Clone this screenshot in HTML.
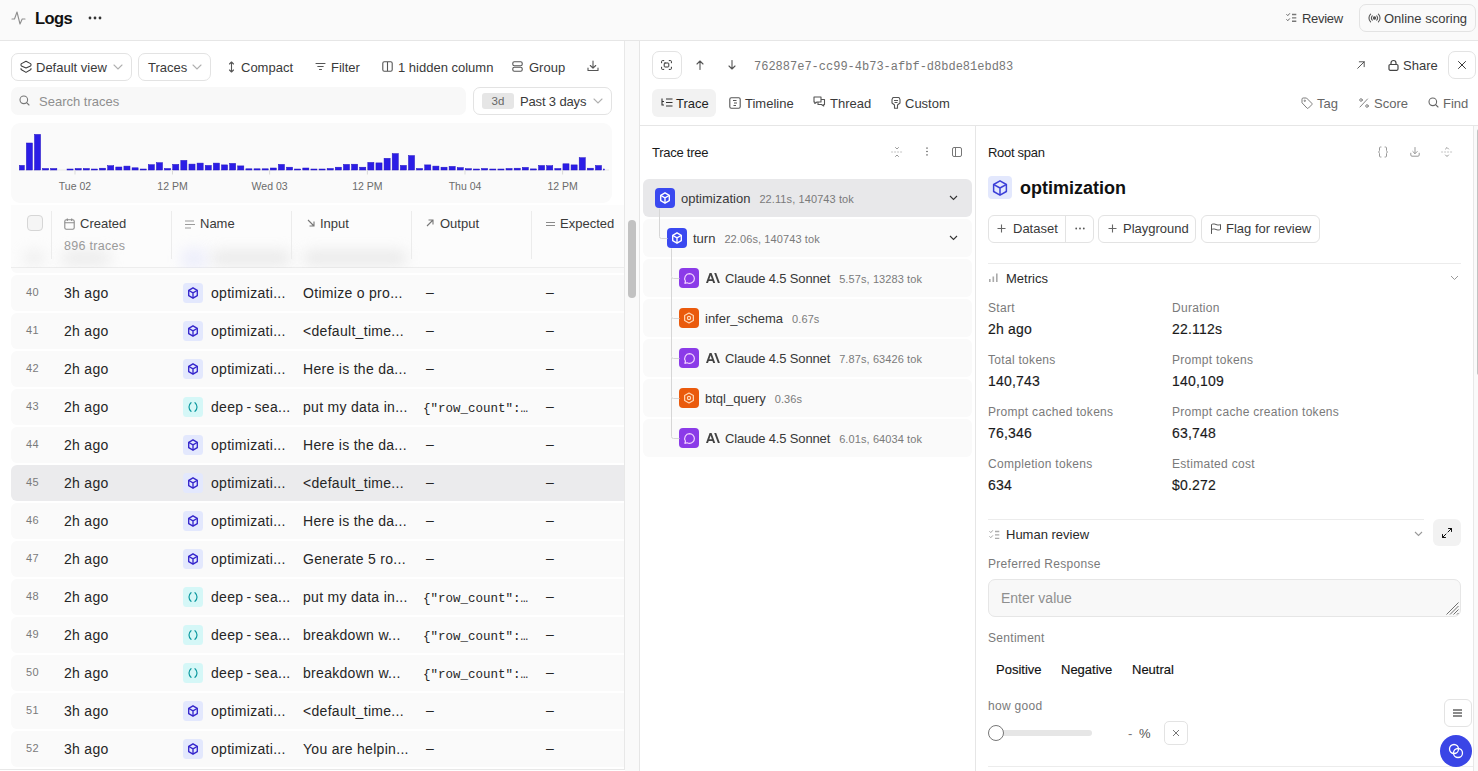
<!DOCTYPE html>
<html><head><meta charset="utf-8">
<style>
*{box-sizing:border-box}
html,body{margin:0;padding:0}
body{width:1478px;height:771px;overflow:hidden;position:relative;background:#fff;font-family:"Liberation Sans",sans-serif;color:#1f1f1f;font-size:13px}
.abs{position:absolute}
svg{display:block}
.topbar{position:absolute;left:0;top:0;width:1478px;height:41px;background:#fafafa;border-bottom:1px solid #e6e6e6}
.btn{position:absolute;border:1px solid #e3e3e3;border-radius:7px;background:#fff}
.t13{font-size:13px;line-height:16px;color:#3a3a3a;white-space:nowrap}
.ic{position:absolute;color:#555}
/* table */
.row{position:absolute;left:11px;width:700px;height:36px;background:#fafafa;border-radius:6px;font-size:14px;line-height:36px;color:#262626;letter-spacing:0.3px;white-space:nowrap}
.row.sel{background:#ebebed}
.row .rn{position:absolute;left:15px;top:-1px;font-size:11px;color:#7a7a7a;letter-spacing:0.3px}
.row .c1{position:absolute;left:53px;top:0}
.row .nic{position:absolute;left:172px;top:8px;width:20px;height:20px;border-radius:3.5px;display:flex;align-items:center;justify-content:center}
.row .c2{position:absolute;left:200px;top:0}
.row .c3{position:absolute;left:292px;top:0}
.row .c4{position:absolute;left:412px;top:0}
.dash{margin-left:3px;position:relative;top:-1.5px}
.row .c5{position:absolute;left:535px;top:0}
.mono{font-family:"Liberation Mono",monospace;font-size:12.5px;letter-spacing:0}
.tlab{position:absolute;top:179px;width:80px;text-align:center;font-size:10.5px;color:#6b6b6b;line-height:14px}
.th{position:absolute;top:216px;font-size:13px;line-height:16px;color:#3a3a3a;white-space:nowrap}
.vdiv{position:absolute;top:211px;width:1px;height:48px;background:#ececec}
/* right panel */
.tab{position:absolute;top:90px;height:28px;line-height:28px;font-size:13px;color:#3a3a3a;white-space:nowrap}
.tree-row{position:absolute;left:643px;width:329px;height:38px;border-radius:6px;background:#fafafa;white-space:nowrap}
.tree-row.sel{background:#e8e8ea}
.tic{position:absolute;top:9px;width:20px;height:20px;border-radius:4px;display:flex;align-items:center;justify-content:center}
.tname{position:absolute;top:1px;line-height:37px;font-size:13px;color:#383838}
.tmeta{font-size:11px;color:#7a7a7a;margin-left:9px;letter-spacing:0.1px;position:relative;top:-0.5px}
.mlab{position:absolute;font-size:12px;color:#7a7a7a;line-height:14px;white-space:nowrap;letter-spacing:0.3px}
.mval{position:absolute;font-size:14px;color:#1a1a1a;line-height:16px;white-space:nowrap;-webkit-text-stroke:0.15px #1a1a1a;letter-spacing:0.2px}
.sent{top:662px;font-size:13px;line-height:16px;color:#111;-webkit-text-stroke:0.15px #111}
</style></head>
<body>
<!-- TOP BAR -->
<div class="topbar"></div>
<div class="ic" style="left:11px;top:11px;color:#8e8e8e">
<svg width="15" height="14" viewBox="0 0 15 14" fill="none" stroke="currentColor" stroke-width="1.1" stroke-linecap="round" stroke-linejoin="round"><path d="M1 8h2.5L6 1l3 12 2.2-5H14"/></svg></div>
<div class="abs" style="left:35px;top:8px;font-size:16.5px;line-height:20px;font-weight:bold;color:#111;letter-spacing:-0.6px">Logs</div>
<div class="abs" style="left:88px;top:16px"><svg width="14" height="4" viewBox="0 0 14 4" fill="#333"><circle cx="2" cy="2" r="1.4"/><circle cx="7" cy="2" r="1.4"/><circle cx="12" cy="2" r="1.4"/></svg></div>

<div class="ic" style="left:1286px;top:13px;color:#555"><svg width="11" height="10" viewBox="0 0 11 10" fill="none" stroke="currentColor" stroke-width="0.9" stroke-linecap="round"><path d="M0.7 1.5l1.1 1.1L3.6 0.6M0.7 6.6l1.1 1.1 1.8-2"/><path d="M6 1.5h4.3M6 4.9h4.3M6 8.3h4.3" stroke-width="1.4" stroke-linecap="butt" stroke="#777"/></svg></div>
<div class="abs t13" style="left:1302px;top:11px;letter-spacing:-0.3px">Review</div>
<div class="btn" style="left:1359px;top:4px;width:117px;height:28px;background:#fafafa"></div>
<div class="ic" style="left:1368px;top:12px;color:#555"><svg width="13" height="12" viewBox="0 0 13 12" fill="none" stroke="currentColor" stroke-width="1.1" stroke-linecap="round"><circle cx="6.5" cy="6" r="1.2" fill="currentColor"/><path d="M4.3 3.8a3.1 3.1 0 0 0 0 4.4M8.7 3.8a3.1 3.1 0 0 1 0 4.4M2.6 2.1a5.5 5.5 0 0 0 0 7.8M10.4 2.1a5.5 5.5 0 0 1 0 7.8"/></svg></div>
<div class="abs t13" style="left:1384px;top:11px">Online scoring</div>

<!-- LEFT PANEL -->
<div class="btn" style="left:11px;top:53px;width:121px;height:28px"></div>
<div class="ic" style="left:20px;top:60px"><svg width="12" height="14" viewBox="0 0 12 14" fill="none" stroke="#3a3a3a" stroke-width="1.05" stroke-linejoin="round" stroke-linecap="round"><path d="M1 4.5Q1 4 1.5 3.6L6 1.3l4.5 2.3Q11 4 11 4.5v0.6Q11 5.6 10.5 6L6 7.9 1.5 6Q1 5.6 1 5.1z"/><path d="M1 8.6v0.4Q1 9.4 1.5 9.8L6 12.4l4.5-2.6Q11 9.4 11 9v-0.4"/></svg></div>
<div class="abs t13" style="left:36px;top:60px">Default view</div>
<div class="ic" style="left:113px;top:64px"><svg width="10" height="6" viewBox="0 0 10 6" fill="none" stroke="#b0b0b0" stroke-width="1.1" stroke-linecap="round"><path d="M1 1l4 4 4-4"/></svg></div>
<div class="btn" style="left:138px;top:53px;width:73px;height:28px"></div>
<div class="abs t13" style="left:148px;top:60px">Traces</div>
<div class="ic" style="left:192px;top:64px"><svg width="10" height="6" viewBox="0 0 10 6" fill="none" stroke="#b0b0b0" stroke-width="1.1" stroke-linecap="round"><path d="M1 1l4 4 4-4"/></svg></div>

<div class="ic" style="left:228px;top:61px"><svg width="7" height="12" viewBox="0 0 7 12" fill="none" stroke="#555" stroke-width="1.1" stroke-linecap="round" stroke-linejoin="round"><path d="M3.5 1v10M1.5 3L3.5 1l2 2M1.5 9l2 2 2-2"/></svg></div>
<div class="abs t13" style="left:241px;top:60px">Compact</div>
<div class="ic" style="left:315px;top:62px"><svg width="11" height="9" viewBox="0 0 11 9" fill="none" stroke="#555" stroke-width="1.1" stroke-linecap="round"><path d="M1 1.5h9M2.8 4.5h5.4M4.5 7.5h2"/></svg></div>
<div class="abs t13" style="left:331px;top:60px">Filter</div>
<div class="ic" style="left:382px;top:61px"><svg width="11" height="11" viewBox="0 0 11 11" fill="none" stroke="#555" stroke-width="1.1"><rect x="0.8" y="0.8" width="9.4" height="9.4" rx="1.5"/><path d="M5.5 1v9"/></svg></div>
<div class="abs t13" style="left:398px;top:60px">1 hidden column</div>
<div class="ic" style="left:512px;top:61px"><svg width="11" height="11" viewBox="0 0 11 11" fill="none" stroke="#555" stroke-width="1.1"><rect x="0.8" y="0.8" width="9.4" height="4" rx="1.5"/><rect x="0.8" y="6.2" width="9.4" height="4" rx="1.5"/></svg></div>
<div class="abs t13" style="left:529px;top:60px">Group</div>
<div class="ic" style="left:587px;top:60px"><svg width="12" height="12" viewBox="0 0 12 12" fill="none" stroke="#555" stroke-width="1.1" stroke-linecap="round" stroke-linejoin="round"><path d="M6 1v7M3.3 5.5L6 8.2l2.7-2.7M1 8v2.5h10V8"/></svg></div>

<!-- search -->
<div class="abs" style="left:11px;top:87px;width:455px;height:28px;background:#f8f8f8;border-radius:7px"></div>
<div class="ic" style="left:19px;top:95px"><svg width="11" height="11" viewBox="0 0 11 11" fill="none" stroke="#777" stroke-width="1.1" stroke-linecap="round"><circle cx="4.8" cy="4.8" r="3.8"/><path d="M7.6 7.6L10 10"/></svg></div>
<div class="abs t13" style="left:39px;top:94px;color:#8f8f8f">Search traces</div>
<div class="btn" style="left:473px;top:87px;width:139px;height:28px"></div>
<div class="abs" style="left:482px;top:93px;width:32px;height:16px;background:#e6e6e6;border-radius:3px;font-size:11.5px;line-height:17px;text-align:center;color:#666">3d</div>
<div class="abs t13" style="left:520px;top:94px;letter-spacing:-0.15px">Past 3 days</div>
<div class="ic" style="left:593px;top:98px"><svg width="10" height="6" viewBox="0 0 10 6" fill="none" stroke="#b0b0b0" stroke-width="1.1" stroke-linecap="round"><path d="M1 1l4 4 4-4"/></svg></div>

<!-- chart -->
<div class="abs" style="left:11px;top:123px;width:601px;height:80px;background:#fafafa;border-radius:9px"></div>
<svg class="abs" style="left:0;top:0" width="625" height="205" viewBox="0 0 625 205">
<rect x="19" y="169.5" width="590" height="1" fill="#e6e6e6"/>
<g fill="#2b1de6" stroke="#2414c2" stroke-width="0.5"><rect x="19.35" y="165.40" width="4.97" height="4.60"/><rect x="26.35" y="143.00" width="6.10" height="27.00"/><rect x="34.48" y="134.40" width="6.10" height="35.60"/><rect x="42.61" y="168.50" width="6.10" height="1.50"/><rect x="50.74" y="168.50" width="6.10" height="1.50"/><rect x="67.00" y="169.00" width="6.10" height="1.00"/><rect x="75.13" y="168.50" width="6.10" height="1.50"/><rect x="83.26" y="168.50" width="6.10" height="1.50"/><rect x="91.39" y="169.00" width="6.10" height="1.00"/><rect x="99.52" y="168.20" width="6.10" height="1.80"/><rect x="107.65" y="165.70" width="6.10" height="4.30"/><rect x="115.78" y="167.00" width="6.10" height="3.00"/><rect x="123.91" y="166.10" width="6.10" height="3.90"/><rect x="132.04" y="167.80" width="6.10" height="2.20"/><rect x="140.17" y="169.00" width="6.10" height="1.00"/><rect x="148.30" y="164.70" width="6.10" height="5.30"/><rect x="156.43" y="162.70" width="6.10" height="7.30"/><rect x="164.56" y="168.50" width="6.10" height="1.50"/><rect x="172.69" y="164.40" width="6.10" height="5.60"/><rect x="180.82" y="160.40" width="6.10" height="9.60"/><rect x="188.95" y="164.10" width="6.10" height="5.90"/><rect x="197.08" y="163.10" width="6.10" height="6.90"/><rect x="205.21" y="165.40" width="6.10" height="4.60"/><rect x="213.34" y="163.10" width="6.10" height="6.90"/><rect x="221.47" y="164.90" width="6.10" height="5.10"/><rect x="229.60" y="163.40" width="6.10" height="6.60"/><rect x="237.73" y="165.90" width="6.10" height="4.10"/><rect x="245.86" y="168.80" width="6.10" height="1.20"/><rect x="253.99" y="168.80" width="6.10" height="1.20"/><rect x="262.12" y="168.80" width="6.10" height="1.20"/><rect x="270.25" y="168.00" width="6.10" height="2.00"/><rect x="278.38" y="164.40" width="6.10" height="5.60"/><rect x="286.51" y="167.20" width="6.10" height="2.80"/><rect x="294.64" y="169.00" width="6.10" height="1.00"/><rect x="302.77" y="168.00" width="6.10" height="2.00"/><rect x="310.90" y="169.00" width="6.10" height="1.00"/><rect x="319.03" y="169.00" width="6.10" height="1.00"/><rect x="327.16" y="168.50" width="6.10" height="1.50"/><rect x="335.29" y="167.20" width="6.10" height="2.80"/><rect x="343.42" y="164.40" width="6.10" height="5.60"/><rect x="351.55" y="164.20" width="6.10" height="5.80"/><rect x="359.68" y="167.20" width="6.10" height="2.80"/><rect x="367.81" y="162.40" width="6.10" height="7.60"/><rect x="375.94" y="162.90" width="6.10" height="7.10"/><rect x="384.07" y="158.30" width="6.10" height="11.70"/><rect x="392.20" y="153.60" width="6.10" height="16.40"/><rect x="400.33" y="165.40" width="6.10" height="4.60"/><rect x="408.46" y="155.60" width="6.10" height="14.40"/><rect x="416.59" y="168.50" width="6.10" height="1.50"/><rect x="424.72" y="164.90" width="6.10" height="5.10"/><rect x="432.85" y="166.10" width="6.10" height="3.90"/><rect x="440.98" y="167.20" width="6.10" height="2.80"/><rect x="449.11" y="166.40" width="6.10" height="3.60"/><rect x="457.24" y="167.60" width="6.10" height="2.40"/><rect x="465.37" y="168.70" width="6.10" height="1.30"/><rect x="473.50" y="169.00" width="6.10" height="1.00"/><rect x="481.63" y="168.50" width="6.10" height="1.50"/><rect x="489.76" y="169.00" width="6.10" height="1.00"/><rect x="497.89" y="169.00" width="6.10" height="1.00"/><rect x="506.02" y="168.50" width="6.10" height="1.50"/><rect x="514.15" y="168.20" width="6.10" height="1.80"/><rect x="522.28" y="167.40" width="6.10" height="2.60"/><rect x="530.41" y="168.90" width="6.10" height="1.10"/><rect x="538.54" y="165.50" width="6.10" height="4.50"/><rect x="546.67" y="165.70" width="6.10" height="4.30"/><rect x="554.80" y="168.50" width="6.10" height="1.50"/><rect x="562.93" y="163.80" width="6.10" height="6.20"/><rect x="571.06" y="164.90" width="6.10" height="5.10"/><rect x="579.19" y="157.70" width="6.10" height="12.30"/><rect x="587.32" y="168.20" width="6.10" height="1.80"/><rect x="595.45" y="165.50" width="6.10" height="4.50"/><rect x="603.58" y="169.00" width="0.80" height="1.00"/></g>
<rect x="74.5" y="170" width="1" height="4.5" fill="#d9d9d9"/><rect x="172.0" y="170" width="1" height="4.5" fill="#d9d9d9"/><rect x="269.1" y="170" width="1" height="4.5" fill="#d9d9d9"/><rect x="366.9" y="170" width="1" height="4.5" fill="#d9d9d9"/><rect x="464.5" y="170" width="1" height="4.5" fill="#d9d9d9"/><rect x="562.1" y="170" width="1" height="4.5" fill="#d9d9d9"/>
</svg>
<div class="tlab" style="left:35.0px">Tue 02</div><div class="tlab" style="left:132.5px">12 PM</div><div class="tlab" style="left:229.6px">Wed 03</div><div class="tlab" style="left:327.4px">12 PM</div><div class="tlab" style="left:425.0px">Thu 04</div><div class="tlab" style="left:522.6px">12 PM</div>

<!-- rows -->
<div class="abs" style="left:0;top:0;width:624px;height:769px;overflow:hidden">
<div class="row" style="top:275px"><div class="rn">40</div><div class="c1">3h ago</div><div class="nic" style="background:#e3e8fd"><svg width="12" height="12" viewBox="0 0 24 24" fill="none" stroke="#3526cc" stroke-width="2.7" stroke-linejoin="round"><path d="M12 1.6l8.6 5.1v10.6L12 22.4l-8.6-5.1V6.7z"/><path d="M3.8 7L12 11.9l8.2-4.9M12 11.9v10.3"/></svg></div><div class="c2">optimizati...</div><div class="c3">Otimize o pro...</div><div class="c4"><span class="dash">–</span></div><div class="c5"><span class="dash" style="margin-left:0">–</span></div></div>
<div class="row" style="top:313px"><div class="rn">41</div><div class="c1">2h ago</div><div class="nic" style="background:#e3e8fd"><svg width="12" height="12" viewBox="0 0 24 24" fill="none" stroke="#3526cc" stroke-width="2.7" stroke-linejoin="round"><path d="M12 1.6l8.6 5.1v10.6L12 22.4l-8.6-5.1V6.7z"/><path d="M3.8 7L12 11.9l8.2-4.9M12 11.9v10.3"/></svg></div><div class="c2">optimizati...</div><div class="c3">&lt;default_time...</div><div class="c4"><span class="dash">–</span></div><div class="c5"><span class="dash" style="margin-left:0">–</span></div></div>
<div class="row" style="top:351px"><div class="rn">42</div><div class="c1">2h ago</div><div class="nic" style="background:#e3e8fd"><svg width="12" height="12" viewBox="0 0 24 24" fill="none" stroke="#3526cc" stroke-width="2.7" stroke-linejoin="round"><path d="M12 1.6l8.6 5.1v10.6L12 22.4l-8.6-5.1V6.7z"/><path d="M3.8 7L12 11.9l8.2-4.9M12 11.9v10.3"/></svg></div><div class="c2">optimizati...</div><div class="c3">Here is the da...</div><div class="c4"><span class="dash">–</span></div><div class="c5"><span class="dash" style="margin-left:0">–</span></div></div>
<div class="row" style="top:389px"><div class="rn">43</div><div class="c1">2h ago</div><div class="nic" style="background:#d5f7f7"><svg width="12" height="12" viewBox="0 0 24 24" fill="none" stroke="#0f9aa0" stroke-width="2.4" stroke-linecap="round"><path d="M8 3.5C5 6 4 9 4 12s1 6 4 8.5M16 3.5c3 2.5 4 5.5 4 8.5s-1 6-4 8.5"/></svg></div><div class="c2">deep&#8201;-&#8201;sea...</div><div class="c3">put my data in...</div><div class="c4"><span class="mono">{"row_count":…</span></div><div class="c5"><span class="dash" style="margin-left:0">–</span></div></div>
<div class="row" style="top:427px"><div class="rn">44</div><div class="c1">2h ago</div><div class="nic" style="background:#e3e8fd"><svg width="12" height="12" viewBox="0 0 24 24" fill="none" stroke="#3526cc" stroke-width="2.7" stroke-linejoin="round"><path d="M12 1.6l8.6 5.1v10.6L12 22.4l-8.6-5.1V6.7z"/><path d="M3.8 7L12 11.9l8.2-4.9M12 11.9v10.3"/></svg></div><div class="c2">optimizati...</div><div class="c3">Here is the da...</div><div class="c4"><span class="dash">–</span></div><div class="c5"><span class="dash" style="margin-left:0">–</span></div></div>
<div class="row sel" style="top:465px"><div class="rn">45</div><div class="c1">2h ago</div><div class="nic" style="background:#e3e8fd"><svg width="12" height="12" viewBox="0 0 24 24" fill="none" stroke="#3526cc" stroke-width="2.7" stroke-linejoin="round"><path d="M12 1.6l8.6 5.1v10.6L12 22.4l-8.6-5.1V6.7z"/><path d="M3.8 7L12 11.9l8.2-4.9M12 11.9v10.3"/></svg></div><div class="c2">optimizati...</div><div class="c3">&lt;default_time...</div><div class="c4"><span class="dash">–</span></div><div class="c5"><span class="dash" style="margin-left:0">–</span></div></div>
<div class="row" style="top:503px"><div class="rn">46</div><div class="c1">2h ago</div><div class="nic" style="background:#e3e8fd"><svg width="12" height="12" viewBox="0 0 24 24" fill="none" stroke="#3526cc" stroke-width="2.7" stroke-linejoin="round"><path d="M12 1.6l8.6 5.1v10.6L12 22.4l-8.6-5.1V6.7z"/><path d="M3.8 7L12 11.9l8.2-4.9M12 11.9v10.3"/></svg></div><div class="c2">optimizati...</div><div class="c3">Here is the da...</div><div class="c4"><span class="dash">–</span></div><div class="c5"><span class="dash" style="margin-left:0">–</span></div></div>
<div class="row" style="top:541px"><div class="rn">47</div><div class="c1">2h ago</div><div class="nic" style="background:#e3e8fd"><svg width="12" height="12" viewBox="0 0 24 24" fill="none" stroke="#3526cc" stroke-width="2.7" stroke-linejoin="round"><path d="M12 1.6l8.6 5.1v10.6L12 22.4l-8.6-5.1V6.7z"/><path d="M3.8 7L12 11.9l8.2-4.9M12 11.9v10.3"/></svg></div><div class="c2">optimizati...</div><div class="c3">Generate 5 ro...</div><div class="c4"><span class="dash">–</span></div><div class="c5"><span class="dash" style="margin-left:0">–</span></div></div>
<div class="row" style="top:579px"><div class="rn">48</div><div class="c1">2h ago</div><div class="nic" style="background:#d5f7f7"><svg width="12" height="12" viewBox="0 0 24 24" fill="none" stroke="#0f9aa0" stroke-width="2.4" stroke-linecap="round"><path d="M8 3.5C5 6 4 9 4 12s1 6 4 8.5M16 3.5c3 2.5 4 5.5 4 8.5s-1 6-4 8.5"/></svg></div><div class="c2">deep&#8201;-&#8201;sea...</div><div class="c3">put my data in...</div><div class="c4"><span class="mono">{"row_count":…</span></div><div class="c5"><span class="dash" style="margin-left:0">–</span></div></div>
<div class="row" style="top:617px"><div class="rn">49</div><div class="c1">2h ago</div><div class="nic" style="background:#d5f7f7"><svg width="12" height="12" viewBox="0 0 24 24" fill="none" stroke="#0f9aa0" stroke-width="2.4" stroke-linecap="round"><path d="M8 3.5C5 6 4 9 4 12s1 6 4 8.5M16 3.5c3 2.5 4 5.5 4 8.5s-1 6-4 8.5"/></svg></div><div class="c2">deep&#8201;-&#8201;sea...</div><div class="c3">breakdown w...</div><div class="c4"><span class="mono">{"row_count":…</span></div><div class="c5"><span class="dash" style="margin-left:0">–</span></div></div>
<div class="row" style="top:655px"><div class="rn">50</div><div class="c1">2h ago</div><div class="nic" style="background:#d5f7f7"><svg width="12" height="12" viewBox="0 0 24 24" fill="none" stroke="#0f9aa0" stroke-width="2.4" stroke-linecap="round"><path d="M8 3.5C5 6 4 9 4 12s1 6 4 8.5M16 3.5c3 2.5 4 5.5 4 8.5s-1 6-4 8.5"/></svg></div><div class="c2">deep&#8201;-&#8201;sea...</div><div class="c3">breakdown w...</div><div class="c4"><span class="mono">{"row_count":…</span></div><div class="c5"><span class="dash" style="margin-left:0">–</span></div></div>
<div class="row" style="top:693px"><div class="rn">51</div><div class="c1">3h ago</div><div class="nic" style="background:#e3e8fd"><svg width="12" height="12" viewBox="0 0 24 24" fill="none" stroke="#3526cc" stroke-width="2.7" stroke-linejoin="round"><path d="M12 1.6l8.6 5.1v10.6L12 22.4l-8.6-5.1V6.7z"/><path d="M3.8 7L12 11.9l8.2-4.9M12 11.9v10.3"/></svg></div><div class="c2">optimizati...</div><div class="c3">&lt;default_time...</div><div class="c4"><span class="dash">–</span></div><div class="c5"><span class="dash" style="margin-left:0">–</span></div></div>
<div class="row" style="top:731px"><div class="rn">52</div><div class="c1">3h ago</div><div class="nic" style="background:#e3e8fd"><svg width="12" height="12" viewBox="0 0 24 24" fill="none" stroke="#3526cc" stroke-width="2.7" stroke-linejoin="round"><path d="M12 1.6l8.6 5.1v10.6L12 22.4l-8.6-5.1V6.7z"/><path d="M3.8 7L12 11.9l8.2-4.9M12 11.9v10.3"/></svg></div><div class="c2">optimizati...</div><div class="c3">You are helpin...</div><div class="c4"><span class="dash">–</span></div><div class="c5"><span class="dash" style="margin-left:0">–</span></div></div>

<!-- table header -->
<div class="row" style="top:237px"></div>
<div class="abs" style="left:11px;top:205px;width:700px;height:63px;background:rgba(252,252,252,0.92);border-bottom:1px solid #ededed"></div>
<div class="abs" style="left:11px;top:205px;width:614px;height:63px;overflow:hidden">
<div class="abs" style="left:12px;top:45px;width:22px;height:16px;border-radius:7px;background:#d8d8d8;filter:blur(7px);opacity:0.35"></div><div class="abs" style="left:50px;top:45px;width:50px;height:16px;border-radius:7px;background:#d0d0d0;filter:blur(7px);opacity:0.35"></div>
<div class="abs" style="left:170px;top:43px;width:26px;height:22px;border-radius:8px;background:#d8dbfa;filter:blur(7px);opacity:0.4"></div>
<div class="abs" style="left:200px;top:45px;width:80px;height:16px;border-radius:7px;background:#cfcfcf;filter:blur(7px);opacity:0.38"></div>
<div class="abs" style="left:292px;top:45px;width:104px;height:16px;border-radius:7px;background:#cfcfcf;filter:blur(7px);opacity:0.38"></div>
</div>
<div class="abs" style="left:27px;top:215px;width:16px;height:16px;border:1px solid #d6d6d6;border-radius:4px;background:#f5f5f5"></div>
<div class="vdiv" style="left:51px"></div>
<div class="vdiv" style="left:171px"></div>
<div class="vdiv" style="left:291px"></div>
<div class="vdiv" style="left:411px"></div>
<div class="vdiv" style="left:531px"></div>
<div class="ic" style="left:64px;top:218px"><svg width="11" height="12" viewBox="0 0 11 12" fill="none" stroke="#8a8a8a" stroke-width="1.1"><rect x="0.8" y="1.8" width="9.4" height="9.4" rx="1.5"/><path d="M0.8 4.8h9.4M3.3 0.5v2.5M7.7 0.5v2.5"/></svg></div>
<div class="th" style="left:80px">Created</div>
<div class="abs" style="left:64px;top:238px;font-size:12.5px;line-height:16px;color:#9a9a9a;letter-spacing:0.3px">896 traces</div>
<div class="ic" style="left:185px;top:220px"><svg width="10" height="9" viewBox="0 0 10 9" fill="none" stroke="#9a9a9a" stroke-width="1.1"><path d="M0 1h9M0 4.5h10M0 8h6"/></svg></div>
<div class="th" style="left:200px">Name</div>
<div class="ic" style="left:307px;top:219px"><svg width="8" height="8" viewBox="0 0 8 8" fill="none" stroke="#777" stroke-width="1.1"><path d="M1 1l6 6M7 2.5V7H2.5"/></svg></div>
<div class="th" style="left:320px">Input</div>
<div class="ic" style="left:426px;top:219px"><svg width="8" height="8" viewBox="0 0 8 8" fill="none" stroke="#777" stroke-width="1.1"><path d="M1 7l6-6M2.5 1H7v4.5"/></svg></div>
<div class="th" style="left:440px">Output</div>
<div class="ic" style="left:546px;top:220px"><svg width="9" height="8" viewBox="0 0 9 8" fill="none" stroke="#8a8a8a" stroke-width="1.1"><path d="M0 2.5h9M0 5.5h9"/></svg></div>
<div class="th" style="left:560px">Expected</div>

</div>
<div class="abs" style="left:0;top:769px;width:625px;height:1px;background:#e8e8e8"></div>
<div class="abs" style="left:624px;top:41px;width:1px;height:729px;background:#e8e8e8"></div>
<!-- splitter / scrollbar -->
<div class="abs" style="left:625px;top:41px;width:15px;height:730px;background:#fafafa;border-right:1px solid #e6e6e6"></div>
<div class="abs" style="left:628px;top:220px;width:8px;height:78px;background:#c2c2c2;border-radius:4px"></div>

<!-- RIGHT PANEL header -->
<div class="btn" style="left:652px;top:51px;width:30px;height:28px"></div>
<div class="ic" style="left:661px;top:60px"><svg width="11" height="10" viewBox="0 0 11 10" fill="none" stroke="#333" stroke-width="1" stroke-linecap="round"><path d="M0.6 2.8V1.4a.8.8 0 0 1 .8-.8h1.4M8.2 0.6h1.4a.8.8 0 0 1 .8.8v1.4M10.4 7.2v1.4a.8.8 0 0 1-.8.8H8.2M2.8 9.4H1.4a.8.8 0 0 1-.8-.8V7.2"/><rect x="3.2" y="3" width="4.6" height="4" rx="0.8"/></svg></div>
<div class="ic" style="left:696px;top:60px"><svg width="8" height="10" viewBox="0 0 8 10" fill="none" stroke="#555" stroke-width="1.1" stroke-linecap="round" stroke-linejoin="round"><path d="M4 9.5V1M1 4l3-3 3 3"/></svg></div>
<div class="ic" style="left:728px;top:60px"><svg width="8" height="10" viewBox="0 0 8 10" fill="none" stroke="#555" stroke-width="1.1" stroke-linecap="round" stroke-linejoin="round"><path d="M4 0.5V9M1 6l3 3 3-3"/></svg></div>
<div class="abs" style="left:754px;top:60px;font-family:'Liberation Mono',monospace;font-size:12px;line-height:14px;color:#777">762887e7-cc99-4b73-afbf-d8bde81ebd83</div>

<div class="ic" style="left:1357px;top:61px"><svg width="8" height="8" viewBox="0 0 8 8" fill="none" stroke="#444" stroke-width="0.9" stroke-linecap="round"><path d="M0.7 7.3L7.2 0.8M2.3 0.8h4.9v4.9"/></svg></div>
<div class="ic" style="left:1388px;top:59px"><svg width="11" height="12" viewBox="0 0 11 12" fill="none" stroke="#444" stroke-width="1.2"><rect x="1" y="5.5" width="9" height="5.8" rx="1.2"/><path d="M3 5.5V4a2.5 2.5 0 0 1 5 0v1.5"/></svg></div>
<div class="abs t13" style="left:1403px;top:58px">Share</div>
<div class="btn" style="left:1448px;top:51px;width:28px;height:28px"></div>
<div class="ic" style="left:1458px;top:61px"><svg width="8" height="8" viewBox="0 0 8 8" fill="none" stroke="#222" stroke-width="0.9" stroke-linecap="round"><path d="M0.5 0.5l7 7M7.5 0.5l-7 7"/></svg></div>

<!-- tabs -->
<div class="abs" style="left:652px;top:89px;width:64px;height:28px;background:#f2f2f2;border-radius:6px"></div>
<div class="ic" style="left:661px;top:98px"><svg width="12" height="10" viewBox="0 0 12 10" fill="none" stroke="#333" stroke-width="1.1"><path d="M1 0.5v6.5h2M1 3.5h2M5 1h6.5M5 4.5h6.5M5 8h6.5"/></svg></div>
<div class="tab" style="left:676px;color:#1f1f1f">Trace</div>
<div class="ic" style="left:729px;top:97px"><svg width="12" height="12" viewBox="0 0 12 12" fill="none" stroke="#555" stroke-width="1.1"><rect x="0.8" y="0.8" width="10.4" height="10.4" rx="1.5"/><path d="M4 3.5h3.5M5 6h3M4.5 8.5h2.5"/></svg></div>
<div class="tab" style="left:745px">Timeline</div>
<div class="ic" style="left:813px;top:96px"><svg width="13" height="12" viewBox="0 0 13 12" fill="none" stroke="#555" stroke-width="1.1" stroke-linejoin="round"><path d="M1 1h7v5H4L1.8 7.5V6H1z"/><path d="M8 3.5h3.5v5h-.8V10L8.5 8.5H5V6"/></svg></div>
<div class="tab" style="left:830px">Thread</div>
<div class="ic" style="left:891px;top:96px"><svg width="10" height="13" viewBox="0 0 10 13" fill="none" stroke="#555" stroke-width="1.1" stroke-linejoin="round"><path d="M2 1.5h6l1 2v3.5L6.5 9v3.2H3.5V9L1 7V3.5z"/><path d="M3 4.5h4M3.5 6.5h3"/></svg></div>
<div class="tab" style="left:905px">Custom</div>

<div class="ic" style="left:1301px;top:97px"><svg width="12" height="12" viewBox="0 0 12 12" fill="none" stroke="#777" stroke-width="0.95" stroke-linejoin="round"><path d="M1 2.2a1.2 1.2 0 0 1 1.2-1.2h3.3l5.3 5.3a1 1 0 0 1 0 1.4l-3.4 3.4a1 1 0 0 1-1.4 0L1 5.8z"/><circle cx="3.8" cy="3.8" r="0.7"/></svg></div>
<div class="tab" style="left:1317px;color:#666">Tag</div>
<div class="ic" style="left:1359px;top:98px"><svg width="10" height="10" viewBox="0 0 10 10" fill="none" stroke="#777" stroke-width="0.9" stroke-linecap="round"><path d="M8.5 1L1 9"/><circle cx="2" cy="2" r="1.3"/><circle cx="8" cy="8" r="1.3"/></svg></div>
<div class="tab" style="left:1374px;color:#666">Score</div>
<div class="ic" style="left:1428px;top:97px"><svg width="11" height="11" viewBox="0 0 11 11" fill="none" stroke="#666" stroke-width="1.1" stroke-linecap="round"><circle cx="4.8" cy="4.8" r="3.8"/><path d="M7.6 7.6L10 10"/></svg></div>
<div class="tab" style="left:1443px;color:#666">Find</div>

<div class="abs" style="left:640px;top:125px;width:838px;height:1px;background:#e6e6e6"></div>
<div class="abs" style="left:975px;top:126px;width:1px;height:645px;background:#e6e6e6"></div>
<div class="abs" style="left:1473px;top:126px;width:5px;height:645px;background:#fafafa;border-left:1px solid #e8e8e8"></div>
<div class="abs" style="left:1477px;top:129px;width:4px;height:246px;background:#c2c2c2;border-radius:2px"></div>

<!-- TRACE TREE -->
<div class="abs" style="left:652px;top:145px;font-size:13px;line-height:16px;color:#1a1a1a;letter-spacing:-0.25px">Trace tree</div>
<div class="ic" style="left:891px;top:146px"><svg width="12" height="12" viewBox="0 0 12 12" fill="none" stroke="#999" stroke-width="1" stroke-linecap="round"><path d="M0.5 6h11" stroke="#c4c4c4" stroke-dasharray="1.2 1.8"/><path d="M4.5 1.5L6 3l1.5-1.5M4.5 10.5L6 9l1.5 1.5"/></svg></div>
<div class="ic" style="left:926px;top:147px"><svg width="2" height="9" viewBox="0 0 2 9" fill="#888"><rect x="0" y="0.5" width="2" height="1.2"/><rect x="0" y="3.9" width="2" height="1.2"/><rect x="0" y="7.3" width="2" height="1.2"/></svg></div>
<div class="ic" style="left:952px;top:147px"><svg width="10" height="10" viewBox="0 0 10 10" fill="none" stroke="#777" stroke-width="1"><rect x="0.5" y="0.5" width="9" height="9" rx="1.5"/><path d="M3.5 0.5v9"/></svg></div>

<div class="tree-row sel" style="top:179px"><div class="tic" style="left:12px;background:#3a49f0"><svg width="12" height="12" viewBox="0 0 24 24" fill="none" stroke="#ffffff" stroke-width="2.7" stroke-linejoin="round"><path d="M12 1.6l8.6 5.1v10.6L12 22.4l-8.6-5.1V6.7z"/><path d="M3.8 7L12 11.9l8.2-4.9M12 11.9v10.3"/></svg></div><div class="tname" style="left:38px">optimization<span class="tmeta">22.11s, 140743 tok</span></div>
<div class="ic" style="left:306px;top:16px"><svg width="9" height="6" viewBox="0 0 9 6" fill="none" stroke="#333" stroke-width="1.1"><path d="M1 1l3.5 3.5L8 1"/></svg></div></div>
<div class="tree-row" style="top:219px"><div class="tic" style="left:24px;background:#3a49f0"><svg width="12" height="12" viewBox="0 0 24 24" fill="none" stroke="#ffffff" stroke-width="2.7" stroke-linejoin="round"><path d="M12 1.6l8.6 5.1v10.6L12 22.4l-8.6-5.1V6.7z"/><path d="M3.8 7L12 11.9l8.2-4.9M12 11.9v10.3"/></svg></div><div class="tname" style="left:50px">turn<span class="tmeta">22.06s, 140743 tok</span></div>
<div class="ic" style="left:306px;top:16px"><svg width="9" height="6" viewBox="0 0 9 6" fill="none" stroke="#333" stroke-width="1.1"><path d="M1 1l3.5 3.5L8 1"/></svg></div></div>
<div class="tree-row" style="top:259px"><div class="tic" style="left:36px;background:#8b3be8"><svg width="13" height="13" viewBox="0 0 24 24" fill="none" stroke="#f3d4ff" stroke-width="2.2" stroke-linejoin="round"><path d="M12 3a9 9 0 0 1 0 18c-1.6 0-3-.4-4.3-1.1L3.5 21l1-4.2A9 9 0 0 1 12 3z"/></svg></div><div class="ic" style="left:63px;top:14px"><svg width="14" height="10" viewBox="0 0 14 10" fill="#444"><path d="M3.6 0h2L9.2 10H7.2L6.5 8H2.7L2 10H0zM3.3 6.2h2.6L4.6 2.6zM8.2 0h2l3.7 10h-2z"/></svg></div><div class="tname" style="left:82px;letter-spacing:-0.15px">Claude 4.5 Sonnet<span class="tmeta">5.57s, 13283 tok</span></div></div>
<div class="tree-row" style="top:299px"><div class="tic" style="left:36px;background:#ea5a0c"><svg width="12" height="12" viewBox="0 0 24 24" fill="none" stroke="#ffd9b8" stroke-width="2.4" stroke-linejoin="round"><path d="M12 2l8.7 5v10L12 22l-8.7-5V7z"/><circle cx="12" cy="12" r="3.2"/></svg></div><div class="tname" style="left:62px">infer_schema<span class="tmeta">0.67s</span></div></div>
<div class="tree-row" style="top:339px"><div class="tic" style="left:36px;background:#8b3be8"><svg width="13" height="13" viewBox="0 0 24 24" fill="none" stroke="#f3d4ff" stroke-width="2.2" stroke-linejoin="round"><path d="M12 3a9 9 0 0 1 0 18c-1.6 0-3-.4-4.3-1.1L3.5 21l1-4.2A9 9 0 0 1 12 3z"/></svg></div><div class="ic" style="left:63px;top:14px"><svg width="14" height="10" viewBox="0 0 14 10" fill="#444"><path d="M3.6 0h2L9.2 10H7.2L6.5 8H2.7L2 10H0zM3.3 6.2h2.6L4.6 2.6zM8.2 0h2l3.7 10h-2z"/></svg></div><div class="tname" style="left:82px;letter-spacing:-0.15px">Claude 4.5 Sonnet<span class="tmeta">7.87s, 63426 tok</span></div></div>
<div class="tree-row" style="top:379px"><div class="tic" style="left:36px;background:#ea5a0c"><svg width="12" height="12" viewBox="0 0 24 24" fill="none" stroke="#ffd9b8" stroke-width="2.4" stroke-linejoin="round"><path d="M12 2l8.7 5v10L12 22l-8.7-5V7z"/><circle cx="12" cy="12" r="3.2"/></svg></div><div class="tname" style="left:62px">btql_query<span class="tmeta">0.36s</span></div></div>
<div class="tree-row" style="top:419px"><div class="tic" style="left:36px;background:#8b3be8"><svg width="13" height="13" viewBox="0 0 24 24" fill="none" stroke="#f3d4ff" stroke-width="2.2" stroke-linejoin="round"><path d="M12 3a9 9 0 0 1 0 18c-1.6 0-3-.4-4.3-1.1L3.5 21l1-4.2A9 9 0 0 1 12 3z"/></svg></div><div class="ic" style="left:63px;top:14px"><svg width="14" height="10" viewBox="0 0 14 10" fill="#444"><path d="M3.6 0h2L9.2 10H7.2L6.5 8H2.7L2 10H0zM3.3 6.2h2.6L4.6 2.6zM8.2 0h2l3.7 10h-2z"/></svg></div><div class="tname" style="left:82px;letter-spacing:-0.15px">Claude 4.5 Sonnet<span class="tmeta">6.01s, 64034 tok</span></div></div>
<svg class="abs" style="left:640px;top:200px" width="60" height="245" viewBox="0 0 60 245" fill="none" stroke="#d6d6d6" stroke-width="1">
<path d="M19.5 8.5v28a2 2 0 0 0 2 2h6"/>
<path d="M31.5 48.5v28a2 2 0 0 0 2 2h6M31.5 78v38.5a2 2 0 0 0 2 2h6M31.5 118v38.5a2 2 0 0 0 2 2h6M31.5 158v38.5a2 2 0 0 0 2 2h6M31.5 198v38.5a2 2 0 0 0 2 2h6"/>
</svg>

<!-- ROOT SPAN -->
<div class="abs" style="left:988px;top:145px;font-size:13px;line-height:16px;color:#1a1a1a;letter-spacing:-0.3px">Root span</div>
<div class="ic" style="left:1378px;top:146px"><svg width="10" height="12" viewBox="0 0 10 12" fill="none" stroke="#999" stroke-width="1" stroke-linecap="round"><path d="M3 1H2.4C1.8 1 1.5 1.4 1.5 2v2.5L0.7 6l.8 1.5V10c0 .6.3 1 .9 1H3M7 1h.6c.6 0 .9.4.9 1v2.5L9.3 6l-.8 1.5V10c0 .6-.3 1-.9 1H7"/></svg></div>
<div class="ic" style="left:1410px;top:147px"><svg width="10" height="10" viewBox="0 0 10 10" fill="none" stroke="#999" stroke-width="1" stroke-linecap="round" stroke-linejoin="round"><path d="M5 0.5v6M2.8 4.5L5 6.7l2.2-2.2M0.8 6.2v1.8a1.2 1.2 0 0 0 1.2 1.2h6a1.2 1.2 0 0 0 1.2-1.2V6.2"/></svg></div>
<div class="ic" style="left:1441px;top:146px"><svg width="12" height="12" viewBox="0 0 12 12" fill="none" stroke="#999" stroke-width="1" stroke-linecap="round"><path d="M0.5 6h11" stroke="#c4c4c4" stroke-dasharray="1.2 1.8"/><path d="M4.5 3L6 1.5 7.5 3M4.5 9L6 10.5 7.5 9"/></svg></div>

<div class="abs" style="left:988px;top:176px;width:24px;height:23px;background:#e3e8fd;border-radius:4px;display:flex;align-items:center;justify-content:center"><svg width="18" height="18" viewBox="0 0 24 24" fill="none" stroke="#3b3fd8" stroke-width="2" stroke-linejoin="round"><path d="M12 2.5l8.5 4.8v9.4L12 21.5l-8.5-4.8V7.3z"/><path d="M3.8 7.4L12 12l8.2-4.6M12 12v9.3"/></svg></div>
<div class="abs" style="left:1020px;top:177px;font-size:18px;line-height:22px;font-weight:bold;color:#111">optimization</div>

<div class="btn" style="left:988px;top:215px;width:106px;height:28px;border-radius:6px"></div>
<div class="abs" style="left:1065px;top:216px;width:1px;height:26px;background:#e3e3e3"></div>
<div class="ic" style="left:996px;top:223px"><svg width="11" height="11" viewBox="0 0 11 11" fill="none" stroke="#666" stroke-width="1.1"><path d="M5.5 1.5v8M1.5 5.5h8"/></svg></div>
<div class="abs t13" style="left:1013px;top:221px">Dataset</div>
<div class="abs" style="left:1075px;top:227px"><svg width="10" height="3" viewBox="0 0 10 3" fill="#555"><circle cx="1.2" cy="1.5" r="0.9"/><circle cx="5" cy="1.5" r="0.9"/><circle cx="8.8" cy="1.5" r="0.9"/></svg></div>
<div class="btn" style="left:1098px;top:215px;width:98px;height:28px;border-radius:6px"></div>
<div class="ic" style="left:1107px;top:223px"><svg width="11" height="11" viewBox="0 0 11 11" fill="none" stroke="#666" stroke-width="1.1"><path d="M5.5 1.5v8M1.5 5.5h8"/></svg></div>
<div class="abs t13" style="left:1123px;top:221px">Playground</div>
<div class="btn" style="left:1201px;top:215px;width:119px;height:28px;border-radius:6px"></div>
<div class="ic" style="left:1210px;top:223px"><svg width="11" height="11" viewBox="0 0 11 11" fill="none" stroke="#555" stroke-width="1" stroke-linejoin="round" stroke-linecap="round"><path d="M1.5 10.5V1.5C3 0.8 4.5 0.8 6 1.5s3 0.7 4.5 0v5c-1.5 0.7-3 0.7-4.5 0s-3-0.7-4.5 0"/></svg></div>
<div class="abs t13" style="left:1226px;top:221px">Flag for review</div>

<!-- metrics -->
<div class="abs" style="left:988px;top:263px;width:473px;height:1px;background:#ececec"></div>
<div class="ic" style="left:989px;top:273px"><svg width="9" height="9" viewBox="0 0 9 9" fill="#aaa"><rect x="0" y="6" width="1.6" height="3"/><rect x="3.5" y="3.5" width="1.6" height="5.5"/><rect x="7" y="0.5" width="1.6" height="8.5"/></svg></div>
<div class="abs" style="left:1006px;top:271px;font-size:13px;line-height:16px;color:#2a2a2a">Metrics</div>
<div class="ic" style="left:1450px;top:275px"><svg width="9" height="6" viewBox="0 0 9 6" fill="none" stroke="#999" stroke-width="1"><path d="M1 1l3.5 3.5L8 1"/></svg></div>

<div class="mlab" style="left:988px;top:301px">Start</div><div class="mval" style="left:988px;top:321px">2h ago</div>
<div class="mlab" style="left:1172px;top:301px">Duration</div><div class="mval" style="left:1172px;top:321px">22.112s</div>
<div class="mlab" style="left:988px;top:353px">Total tokens</div><div class="mval" style="left:988px;top:373px">140,743</div>
<div class="mlab" style="left:1172px;top:353px">Prompt tokens</div><div class="mval" style="left:1172px;top:373px">140,109</div>
<div class="mlab" style="left:988px;top:405px">Prompt cached tokens</div><div class="mval" style="left:988px;top:425px">76,346</div>
<div class="mlab" style="left:1172px;top:405px">Prompt cache creation tokens</div><div class="mval" style="left:1172px;top:425px">63,748</div>
<div class="mlab" style="left:988px;top:457px">Completion tokens</div><div class="mval" style="left:988px;top:477px">634</div>
<div class="mlab" style="left:1172px;top:457px">Estimated cost</div><div class="mval" style="left:1172px;top:477px">$0.272</div>

<!-- human review -->
<div class="abs" style="left:988px;top:519px;width:436px;height:1px;background:#ececec"></div>
<div class="ic" style="left:989px;top:530px;color:#999"><svg width="11" height="10" viewBox="0 0 11 10" fill="none" stroke="currentColor" stroke-width="0.9" stroke-linecap="round"><path d="M0.7 1.5l1.1 1.1L3.6 0.6M0.7 6.6l1.1 1.1 1.8-2"/><path d="M6 1.5h4.3M6 4.9h4.3M6 8.3h4.3" stroke-width="1.3" stroke-linecap="butt" stroke="#aaa"/></svg></div>
<div class="abs" style="left:1006px;top:527px;font-size:13px;line-height:16px;color:#2a2a2a">Human review</div>
<div class="ic" style="left:1414px;top:531px"><svg width="9" height="6" viewBox="0 0 9 6" fill="none" stroke="#999" stroke-width="1.1"><path d="M1 1l3.5 3.5L8 1"/></svg></div>
<div class="abs" style="left:1433px;top:519px;width:28px;height:27px;background:#f2f2f2;border-radius:6px"></div>
<div class="ic" style="left:1441px;top:527px"><svg width="12" height="12" viewBox="0 0 12 12" fill="none" stroke="#111" stroke-width="1" stroke-linecap="round" stroke-linejoin="round"><path d="M7.5 1.5h3v3M10.5 1.5L7 5M4.5 10.5h-3v-3M1.5 10.5L5 7"/></svg></div>

<div class="mlab" style="left:988px;top:557px">Preferred Response</div>
<div class="abs" style="left:988px;top:579px;width:473px;height:38px;background:#f8f8f8;border:1px solid #e6e6e6;border-radius:7px"></div>
<div class="abs" style="left:1001px;top:589px;font-size:14px;line-height:18px;color:#8f8f8f">Enter value</div>
<div class="ic" style="left:1446px;top:602px"><svg width="13" height="13" viewBox="0 0 13 13" fill="none" stroke="#707070" stroke-width="1"><path d="M12.5 0.5L0.5 12.5M12.5 4L4 12.5M12.5 7.5L7.5 12.5M12.5 11L11 12.5"/></svg></div>

<div class="mlab" style="left:988px;top:631px">Sentiment</div>
<div class="abs sent" style="left:996px">Positive</div>
<div class="abs sent" style="left:1061px">Negative</div>
<div class="abs sent" style="left:1132px">Neutral</div>

<div class="mlab" style="left:988px;top:699px">how good</div>
<div class="abs" style="left:992px;top:730px;width:100px;height:6px;background:#e6e6e6;border-radius:3px"></div>
<div class="abs" style="left:988px;top:725px;width:16px;height:16px;background:#fff;border:1px solid #777;border-radius:50%"></div>
<div class="abs" style="left:1128px;top:726px;font-size:13px;line-height:16px;color:#777">-</div>
<div class="abs" style="left:1139px;top:726px;font-size:13px;line-height:16px;color:#555">%</div>
<div class="btn" style="left:1164px;top:721px;width:24px;height:24px;border-radius:5px"></div>
<div class="ic" style="left:1172px;top:729px"><svg width="8" height="8" viewBox="0 0 8 8" fill="none" stroke="#777" stroke-width="1"><path d="M1 1l6 6M7 1L1 7"/></svg></div>
<div class="abs" style="left:988px;top:766px;width:485px;height:1px;background:#ececec"></div>

<div class="btn" style="left:1444px;top:699px;width:28px;height:28px;border-radius:6px"></div>
<div class="ic" style="left:1453px;top:709px"><svg width="9" height="8" viewBox="0 0 9 8" fill="none" stroke="#666" stroke-width="1.4"><path d="M0 1h9M0 4h9M0 7h9"/></svg></div>
<div class="abs" style="left:1440px;top:735px;width:32px;height:32px;background:#3a45e6;border-radius:50%"></div>
<div class="ic" style="left:1448px;top:743px"><svg width="16" height="16" viewBox="0 0 16 16" fill="none" stroke="#fff" stroke-width="1.3"><circle cx="6" cy="6" r="4.5"/><circle cx="10" cy="10" r="4.5"/></svg></div>

</body></html>
